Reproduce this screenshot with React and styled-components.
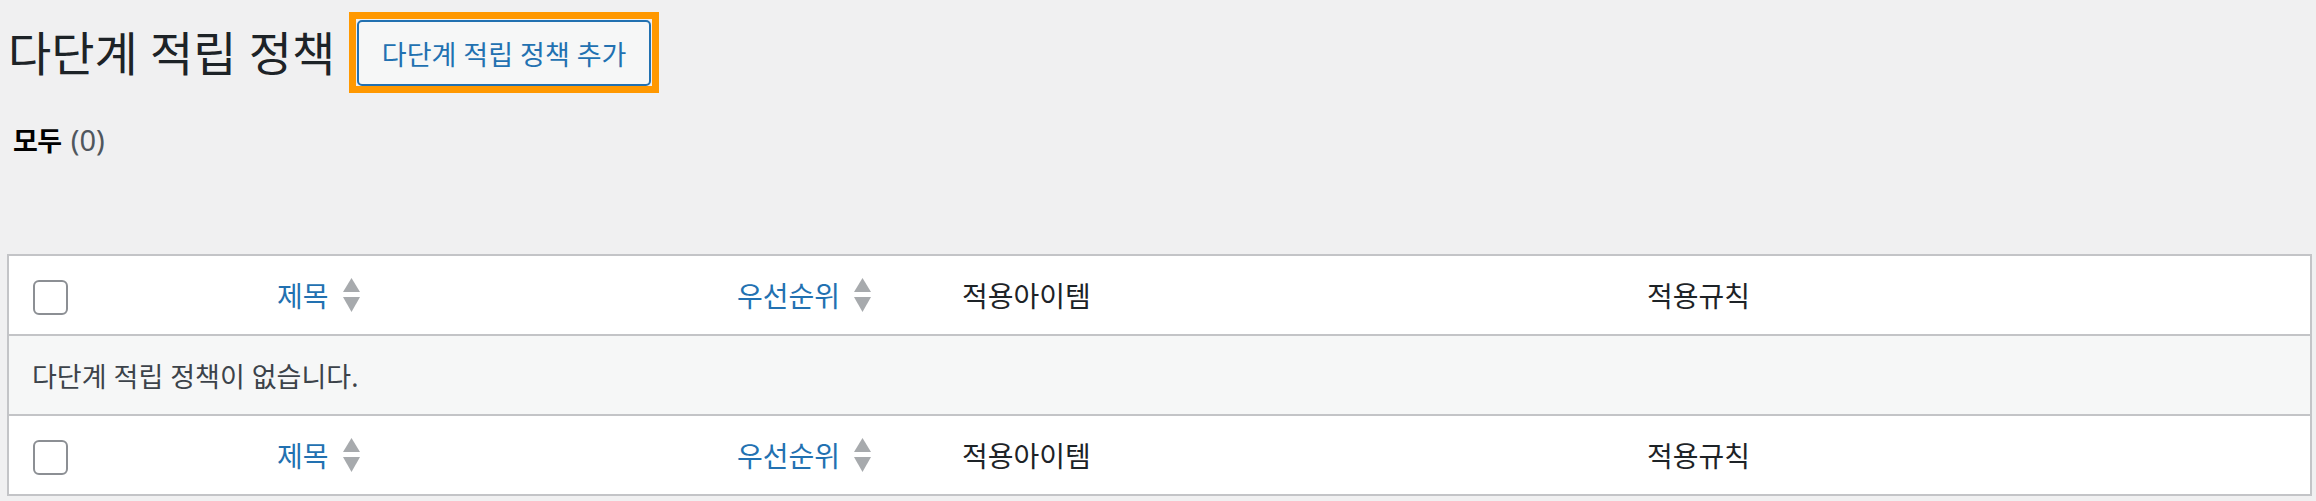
import React from 'react';
import styled, {createGlobalStyle} from 'styled-components';

const GlobalStyle = createGlobalStyle`
  html, body {
    margin: 0;
    padding: 0;
    background: #f0f0f1;
    font-family: "Noto Sans", "Noto Sans CJK KR", sans-serif;
    color: #1d2327;
  }
`;

const Wrap = styled.div`
  padding: 12px 4px 0 7px;
`;

const Header = styled.div`
  display: flex;
  align-items: center;
`;

const Title = styled.h1`
  margin: 0 14px 0 1px;
  font-size: 47px;
  font-weight: 400;
  line-height: 60px;
  color: #1d2327;
`;

const Focus = styled.span`
  display: inline-flex;
  border: 7px solid #ff9800;
  padding: 1px 1px 0;
`;

const AddButton = styled.a`
  display: inline-flex;
  align-items: center;
  justify-content: center;
  box-sizing: border-box;
  width: 294px;
  height: 66px;
  border: 2px solid #2271b1;
  border-radius: 5px;
  background: #f6f7f7;
  color: #2271b1;
  font-size: 27px;
  text-decoration: none;
`;

const SubNav = styled.ul`
  list-style: none;
  margin: 27px 0 0;
  padding: 0 0 0 6px;
  line-height: 40px;
  font-size: 27px;
`;

const Current = styled.b`
  color: #000;
  font-weight: 700;
  letter-spacing: -0.5px;
`;

const Count = styled.span`
  color: #50575e;
  font-weight: 400;
  font-size: 29px;
  margin-left: 9px;
`;

const Table = styled.table`
  margin-top: 93px;
  width: 100%;
  table-layout: fixed;
  border: 2px solid #c3c4c7;
  border-spacing: 0;
  background: #fff;
`;

const HeadCell = styled.th`
  height: 80px;
  box-sizing: border-box;
  padding: 0 0 0 ${p => (p.$check ? '24px' : '20px')};
  text-align: left;
  font-weight: 400;
  font-size: 28px;
  color: #1d2327;
  vertical-align: middle;
  border-bottom: ${p => (p.$foot ? 'none' : '2px solid #c3c4c7')};
  border-top: ${p => (p.$foot ? '2px solid #c3c4c7' : 'none')};
  white-space: nowrap;
`;

const SortLink = styled.a`
  display: inline-flex;
  align-items: center;
  gap: 14px;
  color: #2271b1;
  text-decoration: none;
`;

const Check = styled.input.attrs({type: 'checkbox'})`
  appearance: none;
  display: block;
  margin: 4px 0 0;
  width: 35px;
  height: 35px;
  box-sizing: border-box;
  border: 2px solid #8c8f94;
  border-radius: 6px;
  background: #fff;
`;

const EmptyCell = styled.td`
  height: 78px;
  padding: 0 0 0 23px;
  background: #f6f7f7;
  font-size: 27px;
  color: #3c434a;
`;

const SortIcon = () => (
  <svg width="17" height="34" viewBox="0 0 17 34">
    <polygon points="8.5,0 17,14 0,14" fill="#a7aaad" />
    <polygon points="0,19 17,19 8.5,34" fill="#a7aaad" />
  </svg>
);

const columns = [
  {key: 'cb', width: 248},
  {key: 'title', width: 460, label: '제목', sortable: true},
  {key: 'priority', width: 225, label: '우선순위', sortable: true},
  {key: 'items', width: 685, label: '적용아이템'},
  {key: 'rules', label: '적용규칙'}
];

const HeaderRow = ({foot}) => (
  <tr>
    {columns.map(col => {
      if (col.key === 'cb') {
        return (
          <HeadCell key={col.key} $check $foot={foot}>
            <Check />
          </HeadCell>
        );
      }
      return (
        <HeadCell key={col.key} $foot={foot}>
          {col.sortable ? (
            <SortLink href="#">
              {col.label}
              <SortIcon />
            </SortLink>
          ) : col.label}
        </HeadCell>
      );
    })}
  </tr>
);

const App = () => (
  <>
    <GlobalStyle />
    <Wrap>
      <Header>
        <Title>다단계 적립 정책</Title>
        <Focus>
          <AddButton href="#">다단계 적립 정책 추가</AddButton>
        </Focus>
      </Header>
      <SubNav>
        <li>
          <Current>모두</Current>
          <Count>(0)</Count>
        </li>
      </SubNav>
      <Table>
        <colgroup>
          {columns.map(col => (
            <col key={col.key} style={col.width ? {width: col.width} : undefined} />
          ))}
        </colgroup>
        <thead>
          <HeaderRow />
        </thead>
        <tbody>
          <tr>
            <EmptyCell colSpan={5}>다단계 적립 정책이 없습니다.</EmptyCell>
          </tr>
        </tbody>
        <tfoot>
          <HeaderRow foot />
        </tfoot>
      </Table>
    </Wrap>
  </>
);

export default App;
